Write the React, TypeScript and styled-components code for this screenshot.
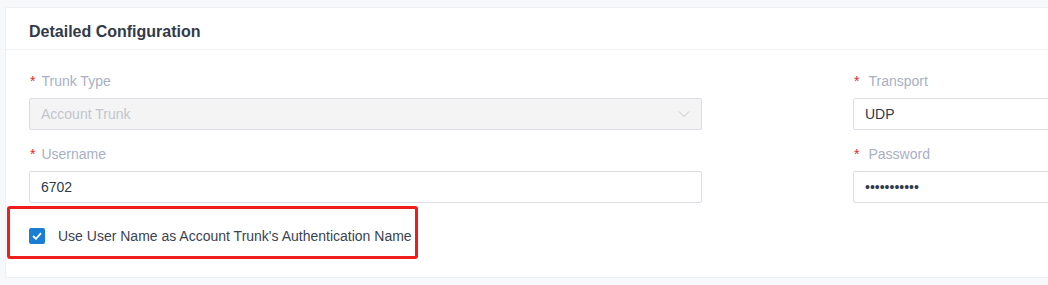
import React from "react";
import styled, { createGlobalStyle } from "styled-components";

const GlobalStyle = createGlobalStyle`
  html, body {
    margin: 0;
    padding: 0;
    background: #f7f8fa;
    overflow: hidden;
    font-family: "Liberation Sans", Arial, sans-serif;
  }
`;

const Page = styled.div`
  padding: 7px 0 0 5px;
`;

const Card = styled.section`
  width: 1600px;
  background: #ffffff;
  border: 1px solid #eef0f4;
  border-radius: 2px;
  padding-bottom: 18px;
`;

const CardHeader = styled.h3`
  margin: 0;
  padding: 15px 23px 8px;
  font-size: 16px;
  line-height: 18px;
  font-weight: bold;
  color: #323a49;
  border-bottom: 1px solid #eff1f5;
`;

const FormGrid = styled.div`
  display: grid;
  grid-template-columns: 673px 673px;
  column-gap: 151px;
  row-gap: 13px;
  padding: 20px 23px 0;
`;

const Field = styled.div`
  display: flex;
  flex-direction: column;
`;

const Label = styled.label<{ $gap: number }>`
  display: flex;
  align-items: center;
  height: 22px;
  margin-bottom: 6px;
  font-size: 14px;
  color: #a9b0c5;

  &::before {
    content: "*";
    color: #f0202a;
    font-size: 14px;
    margin-left: 1px;
    margin-right: ${(p) => p.$gap}px;
  }
`;

const InputBox = styled.div<{ $disabled?: boolean }>`
  display: flex;
  align-items: center;
  justify-content: space-between;
  box-sizing: border-box;
  height: 32px;
  padding: 0 11px;
  border: 1px solid #dcdde6;
  border-radius: 2px;
  background: ${(p) => (p.$disabled ? "#f4f4f5" : "#ffffff")};
  color: ${(p) => (p.$disabled ? "#c2c5cc" : "#303a4a")};
  font-size: 14px;
`;

const TextInput = styled.input`
  flex: 1;
  border: none;
  outline: none;
  padding: 0;
  background: transparent;
  font-family: "Liberation Sans", Arial, sans-serif;
  font-size: 14px;
  color: #303a4a;
`;

const Highlight = styled.div`
  display: flex;
  align-items: center;
  gap: 13px;
  width: 411px;
  height: 53px;
  margin: 3px 0 0 1px;
  padding: 6px 0 0 19px;
  box-sizing: border-box;
  border: 3px solid #f01d1d;
  border-radius: 3px;
  font-size: 14px;
  color: #3a4352;
`;

const CheckBox = styled.span`
  display: flex;
  align-items: center;
  justify-content: center;
  width: 16px;
  height: 16px;
  border-radius: 2px;
  background: #1a7fd2;
`;

const Chevron = () => (
  <svg width="12" height="8" viewBox="0 0 12 8" fill="none">
    <path d="M1 1.5 L6 6.5 L11 1.5" stroke="#c2c5cc" strokeWidth="1" />
  </svg>
);

const App = () => {
  return (
    <Page>
      <GlobalStyle />
      <Card>
        <CardHeader>Detailed Configuration</CardHeader>
        <FormGrid>
          <Field>
            <Label $gap={6}>Trunk Type</Label>
            <InputBox $disabled>
              Account Trunk
              <Chevron />
            </InputBox>
          </Field>
          <Field>
            <Label $gap={9}>Transport</Label>
            <InputBox>UDP</InputBox>
          </Field>
          <Field>
            <Label $gap={6}>Username</Label>
            <InputBox>6702</InputBox>
          </Field>
          <Field>
            <Label $gap={9}>Password</Label>
            <InputBox>
              <TextInput type="password" value="67026702670" readOnly />
            </InputBox>
          </Field>
        </FormGrid>
        <Highlight>
          <CheckBox>
            <svg width="10" height="8" viewBox="0 0 10 8" fill="none">
              <path d="M1 4 L4 6.8 L9 1.2" stroke="#fff" strokeWidth="1.8" />
            </svg>
          </CheckBox>
          Use User Name as Account Trunk's Authentication Name
        </Highlight>
      </Card>
    </Page>
  );
};

export default App;
